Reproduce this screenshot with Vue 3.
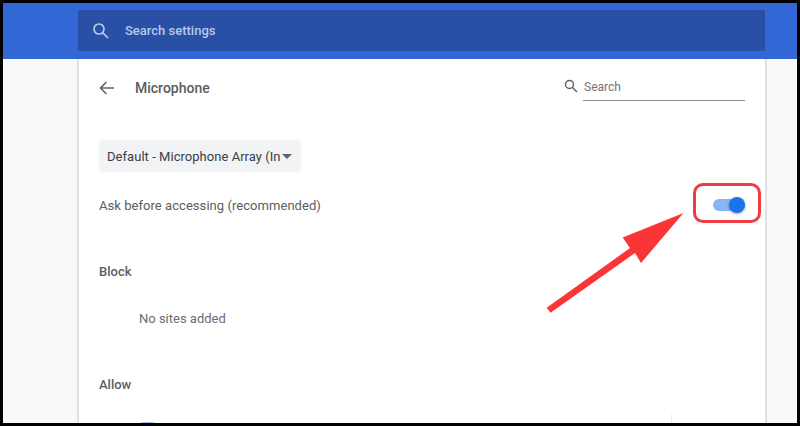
<template>
  <div class="frame">
    <div class="screen">
      <header class="top">
        <div class="searchbar">
          <svg class="sicon" width="18" height="18" viewBox="0 0 18 18" fill="none" stroke="#b9c9ea" stroke-width="1.7">
            <circle cx="7" cy="7" r="5" />
            <path d="M10.8 10.8 16 16" />
          </svg>
          <span>Search settings</span>
        </div>
      </header>
      <main class="page">
        <section class="card">
          <div class="titlerow">
            <svg class="back" width="16" height="14" viewBox="0 0 16 14" fill="none" stroke="#5f6368" stroke-width="1.6">
              <path d="M15 7H1.5M7.5 1 1.5 7l6 6" />
            </svg>
            <h1>Microphone</h1>
            <div class="minisearch">
              <svg width="14" height="14" viewBox="0 0 14 14" fill="none" stroke="#5f6368" stroke-width="1.5">
                <circle cx="5.5" cy="5.5" r="4" />
                <path d="M8.5 8.5 13 13" />
              </svg>
              <span class="field">Search</span>
            </div>
          </div>
          <div class="select">
            <span>Default - Microphone Array (In</span>
            <i class="caret"></i>
          </div>
          <div class="askrow">
            <span>Ask before accessing (recommended)</span>
            <div class="toggle"><i class="thumb"></i></div>
          </div>
          <h2 class="block">Block</h2>
          <p class="empty">No sites added</p>
          <h2 class="allow">Allow</h2>
          <div class="bottomrow">
            <i class="bluebit"></i>
            <i class="rule"></i>
          </div>
        </section>
      </main>
      <div class="callout"></div>
      <svg class="arrow" width="150" height="110" viewBox="540 205 150 110">
        <path d="M683.5 213 622.7 237.5 630 248 546.7 307.7 550.5 312.7 635 253 641 263Z" fill="#fb3535" />
      </svg>
    </div>
  </div>
</template>

<script setup>
</script>

<style>
html, body { margin: 0; background: #000; }
</style>

<style scoped>
.frame {
  width: 800px;
  height: 426px;
  box-sizing: border-box;
  padding: 3px;
  background: #000;
  overflow: hidden;
  font-family: Roboto, "Liberation Sans", sans-serif;
}
.screen {
  position: relative;
  height: 420px;
  background: #f8f9fa;
  display: flex;
  flex-direction: column;
  overflow: hidden;
}
.top {
  flex: none;
  height: 56px;
  background: #3367d6;
  padding: 7px 32px 0 75px;
  box-sizing: border-box;
}
.searchbar {
  height: 41px;
  background: #2a50a6;
  border-radius: 2px;
  display: flex;
  align-items: center;
  padding-left: 14px;
  gap: 15px;
  color: #b7c8ea;
  font-size: 13px;
  font-weight: 500;
}
.page {
  flex: 1;
  padding-left: 74px;
  min-height: 0;
}
.card {
  width: 690px;
  height: 100%;
  box-sizing: border-box;
  background: #fff;
  border-left: 2px solid #e0e1e3;
  border-right: 2px solid #e0e1e3;
  padding: 0 20px;
  color: #3c4043;
  font-size: 13px;
}
.titlerow {
  height: 58px;
  display: flex;
  align-items: center;
}
h1 {
  margin: 0 0 0 20px;
  font-size: 14px;
  font-weight: 500;
  color: #5a5d61;
}
.minisearch {
  margin-left: auto;
  display: flex;
  align-items: center;
  gap: 5px;
}
.minisearch svg { margin-top: -4px; }
.field {
  width: 162px;
  height: 25px;
  box-sizing: border-box;
  padding-left: 1px;
  border-bottom: 1px solid #8e8f92;
  font-size: 12px;
  line-height: 23px;
  color: #757575;
}
.select {
  margin-top: 23px;
  width: 202px;
  height: 32px;
  box-sizing: border-box;
  background: #f1f3f4;
  border-radius: 4px;
  display: flex;
  align-items: center;
  padding-left: 8px;
  color: #3c4043;
  font-size: 13px;
  letter-spacing: 0.04px;
  white-space: nowrap;
}
.caret {
  margin-left: 1px;
  width: 0;
  height: 0;
  border-left: 5px solid transparent;
  border-right: 5px solid transparent;
  border-top: 5px solid #5f6368;
}
.askrow {
  margin-top: 17px;
  height: 32px;
  display: flex;
  align-items: center;
  justify-content: space-between;
  color: #5a5d61;
  letter-spacing: 0.05px;
}
.toggle {
  position: relative;
  width: 32px;
  height: 12px;
  border-radius: 6px;
  background: #8ab4f3;
}
.thumb {
  position: absolute;
  right: 0;
  top: -2px;
  width: 16px;
  height: 16px;
  border-radius: 50%;
  background: #1a73e8;
  box-shadow: 0 1px 3px rgba(0, 0, 0, 0.35);
}
h2 {
  margin: 0;
  font-size: 13px;
  font-weight: 500;
  color: #5a5d61;
  line-height: 16px;
}
.block { margin-top: 43px; }
.empty {
  margin: 31px 0 0 40px;
  line-height: 16px;
  color: #6a6d71;
}
.allow { margin-top: 50px; }
.bottomrow {
  position: relative;
  height: 30px;
}
.bluebit {
  position: absolute;
  left: 42px;
  top: 29px;
  width: 13px;
  height: 2px;
  background: #a9c1f0;
}
.rule {
  position: absolute;
  left: 572px;
  top: 21px;
  width: 1px;
  height: 10px;
  background: #eeeeee;
}
.callout {
  position: absolute;
  left: 689.5px;
  top: 180px;
  width: 68.5px;
  height: 40px;
  box-sizing: border-box;
  border: 3px solid #f03a42;
  border-radius: 10px;
}
.arrow {
  position: absolute;
  left: 537px;
  top: 202px;
}
</style>
